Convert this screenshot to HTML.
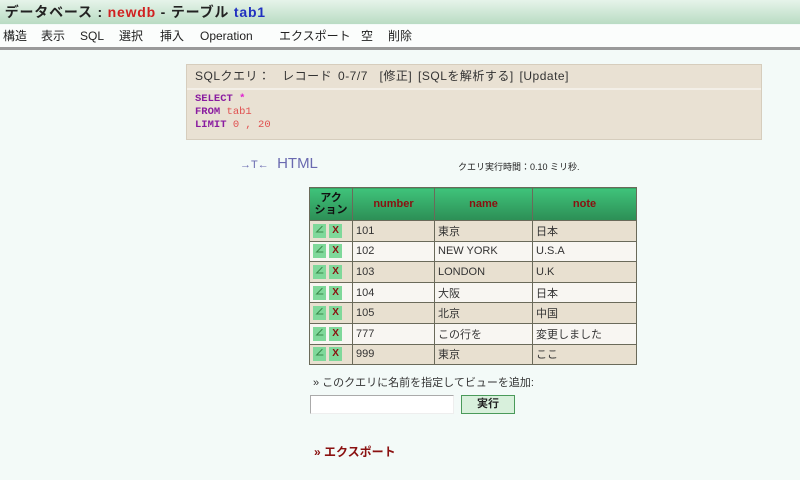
<!DOCTYPE html>
<html><head><meta charset="utf-8"><style>
body{margin:0;width:800px;height:480px;overflow:hidden;background:#f3faf8;font-family:"Liberation Sans","Noto Sans CJK JP",sans-serif;position:relative}
.hd{position:absolute;left:0;top:0;width:800px;height:24px;background:linear-gradient(#e6f4ea,#b9dcc3);font-size:14px;font-weight:bold;line-height:24px;color:#222;letter-spacing:0.8px}
.mn{position:absolute;left:0;top:25px;width:800px;height:22px;background:#fbfdfc;border-bottom:3px solid #9a9a9a;font-size:12px;line-height:22px;color:#222}
.mn span{position:absolute;top:0}
.sq{position:absolute;left:186px;top:64px;width:574px;height:74px;background:#e9e1d3;border:1px solid #d6cdbd}
.sq .t{height:23px;line-height:23px;font-size:12px;color:#333;padding-left:8px;border-bottom:2px solid #f3efe7;letter-spacing:0.5px;word-spacing:2px}
.sq pre{margin:3px 0 0 8px;font:bold 10.5px/13px "Liberation Mono",monospace;color:#8a1ca0}
table{position:absolute;left:309px;top:187px;border-collapse:collapse;font-size:11px;color:#333;table-layout:fixed;width:327px}
td,th{border:1px solid #6a6a5a;height:19.6px;padding:0 3px;overflow:hidden;white-space:nowrap}
th{height:32px;background:linear-gradient(#3fc37a,#2c8e55);color:#8a1010;font-size:11px}
tr.a td{background:#e8e0d0} tr.b td{background:#f8f6f2}
.ic{width:13px;height:14px;background:#7fd89a;display:inline-block;text-align:center;line-height:14px;font-size:10px;font-weight:bold;color:#8a1010;vertical-align:middle}
</style></head><body>
<div class="hd">&nbsp;データベース : <span style="color:#d02020">newdb</span> - テーブル <span style="color:#2030c0">tab1</span></div>
<div class="mn"><span style="left:3px">構造</span><span style="left:41px">表示</span><span style="left:80px">SQL</span><span style="left:119px">選択</span><span style="left:160px">挿入</span><span style="left:200px">Operation</span><span style="left:279px">エクスポート</span><span style="left:361px">空</span><span style="left:388px">削除</span></div>
<div class="sq"><div class="t">SQLクエリ： &nbsp;レコード 0-7/7 &nbsp;[修正] [SQLを解析する] [Update]</div>
<pre>SELECT <span style="color:#e020d0">*</span>
FROM <span style="color:#e05050;font-weight:normal">tab1</span>
LIMIT <span style="color:#e05050;font-weight:normal">0 , 20</span></pre></div>
<div style="position:absolute;left:240px;top:155px;font-size:15px;color:#6a6ab0"><span style="font-size:11px">→T←</span>&nbsp; HTML</div>
<div style="position:absolute;left:458px;top:160px;font-size:9px;color:#222">クエリ実行時間：0.10 ミリ秒.</div>
<table>
<colgroup><col style="width:43px"><col style="width:82px"><col style="width:98px"><col style="width:104px"></colgroup>
<tr><th style="color:#111;font-size:11px;line-height:12px;padding:0">アク<br>ション</th><th>number</th><th>name</th><th>note</th></tr>
<tr class="a"><td><span class="ic" style="color:#3a8a4a">∠</span> <span class="ic">X</span></td><td>101</td><td>東京</td><td>日本</td></tr>
<tr class="b"><td><span class="ic" style="color:#3a8a4a">∠</span> <span class="ic">X</span></td><td>102</td><td>NEW YORK</td><td>U.S.A</td></tr>
<tr class="a"><td><span class="ic" style="color:#3a8a4a">∠</span> <span class="ic">X</span></td><td>103</td><td>LONDON</td><td>U.K</td></tr>
<tr class="b"><td><span class="ic" style="color:#3a8a4a">∠</span> <span class="ic">X</span></td><td>104</td><td>大阪</td><td>日本</td></tr>
<tr class="a"><td><span class="ic" style="color:#3a8a4a">∠</span> <span class="ic">X</span></td><td>105</td><td>北京</td><td>中国</td></tr>
<tr class="b"><td><span class="ic" style="color:#3a8a4a">∠</span> <span class="ic">X</span></td><td>777</td><td>この行を</td><td>変更しました</td></tr>
<tr class="a"><td><span class="ic" style="color:#3a8a4a">∠</span> <span class="ic">X</span></td><td>999</td><td>東京</td><td>ここ</td></tr>
</table>
<div style="position:absolute;left:313px;top:374px;font-size:11px;color:#333">» このクエリに名前を指定してビューを追加:</div>
<div style="position:absolute;left:310px;top:395px;width:142px;height:17px;background:#fff;border:1px solid #aaa;border-right-color:#eee;border-bottom-color:#eee"></div>
<div style="position:absolute;left:461px;top:395px;width:52px;height:17px;background:#d8f0dc;border:1px solid #4a9a5a;font-size:11px;font-weight:bold;text-align:center;line-height:17px;color:#222">実行</div>
<div style="position:absolute;left:314px;top:443px;font-size:12px;font-weight:bold;color:#8a1010">» エクスポート</div>
</body></html>
